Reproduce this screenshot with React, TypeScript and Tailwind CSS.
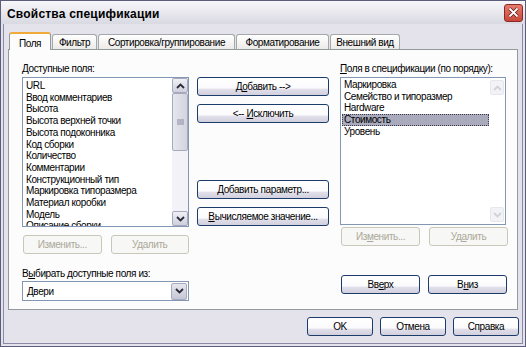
import React from 'react';
import clsx from 'clsx';

const availableFields = [
  'URL',
  'Ввод комментариев',
  'Высота',
  'Высота верхней точки',
  'Высота подоконника',
  'Код сборки',
  'Количество',
  'Комментарии',
  'Конструкционный тип',
  'Маркировка типоразмера',
  'Материал коробки',
  'Модель',
  'Описание сборки',
];

const scheduleFields = ['Маркировка', 'Семейство и типоразмер', 'Hardware', 'Стоимость', 'Уровень'];

const tabs = [
  { label: 'Фильтр', w: 'w-[45px]' },
  { label: 'Сортировка/группирование', w: 'w-[137px]' },
  { label: 'Форматирование', w: 'w-[93px]' },
  { label: 'Внешний вид', w: 'w-[70px]' },
];

function U({ children }: { children: React.ReactNode }) {
  return <span className="underline underline-offset-[1px]">{children}</span>;
}

function XpButton({
  children,
  className,
  disabled,
}: {
  children: React.ReactNode;
  className?: string;
  disabled?: boolean;
}) {
  return (
    <button
      type="button"
      className={clsx(
        'flex h-[19px] items-center justify-center whitespace-nowrap rounded-[3px] border leading-none',
        disabled
          ? 'border-[#c9c7ba] bg-[#f7f7f5] text-[#aca899]'
          : 'border-[#1c3c6c] bg-[linear-gradient(to_bottom,#ffffff_0%,#fbfbfd_58%,#e0dee9_68%,#d2d0dd_100%)] text-black',
        className,
      )}
    >
      <span>{children}</span>
    </button>
  );
}

function Chevron({ up, color = '#2a2a3a' }: { up?: boolean; color?: string }) {
  return (
    <svg width="9" height="6" viewBox="0 0 9 6">
      <path
        d={up ? 'M1 5 L4.5 1.5 L8 5' : 'M1 1 L4.5 4.5 L8 1'}
        fill="none"
        stroke={color}
        strokeWidth="1.8"
      />
    </svg>
  );
}

function ScrollButton({ up, faint }: { up?: boolean; faint?: boolean }) {
  return (
    <div
      className={clsx(
        'flex h-[15px] w-full items-center justify-center rounded-[2px] border',
        faint
          ? 'border-[#e6e6ec] bg-[#f3f3f6]'
          : 'border-[#a9a9bd] bg-[linear-gradient(to_bottom,#f0f0f6,#cfcfdd)]',
      )}
    >
      <Chevron up={up} color={faint ? '#d2d2da' : '#2a2a3a'} />
    </div>
  );
}

function DialogTitle() {
  return (
    <div className="flex h-[23px] items-center justify-between bg-[linear-gradient(to_bottom,#f7f7fa,#d9d9e2)] pl-[6px] pr-[2px]">
      <span className="whitespace-nowrap pt-[2px] text-[12px] font-bold tracking-[0.2px] text-black">
        Свойства спецификации
      </span>
      <div className="flex h-[18px] w-[19px] items-center justify-center rounded-[3px] border border-[#8a2a22] bg-[linear-gradient(to_bottom,#e87a6e,#c8473c)]">
        <svg width="11" height="11" viewBox="0 0 11 11">
          <path d="M1.5 1.5 L9.5 9.5 M9.5 1.5 L1.5 9.5" stroke="#5a1a14" strokeWidth="3.2" />
          <path d="M1.5 1.5 L9.5 9.5 M9.5 1.5 L1.5 9.5" stroke="#ffffff" strokeWidth="1.8" />
        </svg>
      </div>
    </div>
  );
}

function Tabs() {
  return (
    <div className="relative z-10 flex h-[17px] items-end pl-[1px]">
      <div className="-mb-px flex h-[18px] w-[42px] items-start justify-center rounded-t-[3px] border border-b-0 border-[#919b9c] border-t-2 border-t-[#f0a93a] bg-[#fcfcfc] pt-[2px]">
        Поля
      </div>
      {tabs.map((t) => (
        <div
          key={t.label}
          className={clsx(
            'ml-[1px] flex h-[15px] items-center justify-center whitespace-nowrap rounded-t-[3px] border border-b-0 border-[#a4a8a8] bg-[linear-gradient(to_bottom,#ffffff,#ecebe8)]',
            t.w,
          )}
        >
          {t.label}
        </div>
      ))}
    </div>
  );
}

function AvailableList() {
  return (
    <div className="mt-[2px] flex h-[150px] w-[167px] border border-[#8197b4] bg-white">
      <div className="flex-1 overflow-hidden pl-[3px] pt-[2px] leading-[11.7px]">
        {availableFields.map((f) => (
          <div key={f} className="whitespace-nowrap">
            {f}
          </div>
        ))}
      </div>
      <div className="flex w-[16px] flex-col bg-[#f3f2f8]">
        <ScrollButton up />
        <div className="flex h-[58px] items-center justify-center rounded-[2px] border border-[#a9a9bd] bg-[linear-gradient(to_right,#e6e6ee,#d4d4e0)]">
          <svg width="7" height="7" viewBox="0 0 7 7">
            <path d="M0 1 H7 M0 3 H7 M0 5 H7" stroke="#8a8aa0" strokeWidth="1" />
          </svg>
        </div>
        <div className="flex-1" />
        <ScrollButton />
      </div>
    </div>
  );
}

function ScheduleList() {
  return (
    <div className="mt-[2px] flex h-[148px] w-[166px] border border-[#8197b4] bg-white">
      <div className="flex-1 overflow-hidden pl-[1px] pt-[1px] leading-[11.7px]">
        {scheduleFields.map((f) => (
          <div
            key={f}
            className={clsx(
              'whitespace-nowrap pl-[2px]',
              f === 'Стоимость' && 'outline outline-1 -outline-offset-1 outline-dotted outline-[#3a3a4a] bg-[#a9abbd]',
            )}
          >
            {f}
          </div>
        ))}
      </div>
      <div className="flex w-[16px] flex-col justify-between px-[1px] py-[2px]">
        <ScrollButton up faint />
        <ScrollButton faint />
      </div>
    </div>
  );
}

export default function App() {
  return (
    <div className="flex h-[347px] w-[526px] flex-col overflow-hidden border border-[#5c5c7c] bg-[#e4e2ea] font-['Liberation_Sans',Arial,sans-serif] text-[10px] tracking-[-0.4px] text-black">
      <DialogTitle />
      <div className="mx-[2px] mb-[2px] flex flex-1 flex-col border-x border-b border-[#8a8aa6] pl-[4px] pr-[3px] pt-[8px]">
        <Tabs />
        <div className="mr-[1px] flex h-[261px] border border-[#919b9c] bg-[#fcfcfc] pl-[13px] pt-[12px]">
          {/* available fields */}
          <div className="flex w-[167px] flex-col">
            <div className="h-[13px] whitespace-nowrap leading-[13px]">
              <U>Д</U>оступные поля:
            </div>
            <AvailableList />
            <div className="mt-[8px] flex gap-[9px] pl-[1px]">
              <XpButton disabled className="w-[79px]">
                Изменить...
              </XpButton>
              <XpButton disabled className="w-[79px]">
                Удалить
              </XpButton>
            </div>
            <div className="mt-[13px] h-[13px] whitespace-nowrap leading-[13px]">
              В<U>ы</U>бирать доступные поля из:
            </div>
            <div className="mt-[1px] flex h-[20px] items-center border border-[#8197b4] bg-white pl-[4px] pr-[1px]">
              <span className="flex-1">Двери</span>
              <div className="flex h-[17px] w-[16px] items-center justify-center rounded-[2px] border border-[#a9a9bd] bg-[linear-gradient(to_bottom,#e6e6ee,#c6c6d6)]">
                <Chevron />
              </div>
            </div>
          </div>

          {/* move buttons */}
          <div className="ml-[8px] flex w-[132px] flex-col pt-[15px]">
            <XpButton>
              Д<U>о</U>бавить --&gt;
            </XpButton>
            <XpButton className="mt-[8px]">
              &lt;-- <U>И</U>сключить
            </XpButton>
            <XpButton className="mt-[57px]">
              <U>Д</U>обавить параметр...
            </XpButton>
            <XpButton className="mt-[8px]">
              <U>В</U>ычисляемое значение...
            </XpButton>
          </div>

          {/* schedule fields */}
          <div className="ml-[11px] flex w-[168px] flex-col">
            <div className="h-[13px] whitespace-nowrap leading-[13px]">
              <U>П</U>оля в спецификации (по порядку):
            </div>
            <ScheduleList />
            <div className="mt-[2px] flex gap-[9px] pl-[1px]">
              <XpButton disabled className="w-[79px]">
                Из<U>м</U>енить...
              </XpButton>
              <XpButton disabled className="w-[79px]">
                Уд<U>а</U>лить
              </XpButton>
            </div>
            <div className="mt-[29px] flex gap-[8px] pl-[1px]">
              <XpButton className="w-[79px]">
                Вв<U>е</U>рх
              </XpButton>
              <XpButton className="w-[79px]">
                В<U>н</U>из
              </XpButton>
            </div>
          </div>
        </div>

        <div className="mt-[7px] flex justify-end gap-[7px]">
          <XpButton className="w-[66px]">OK</XpButton>
          <XpButton className="w-[66px]">Отмена</XpButton>
          <XpButton className="w-[66px]">Справка</XpButton>
        </div>
      </div>
    </div>
  );
}
